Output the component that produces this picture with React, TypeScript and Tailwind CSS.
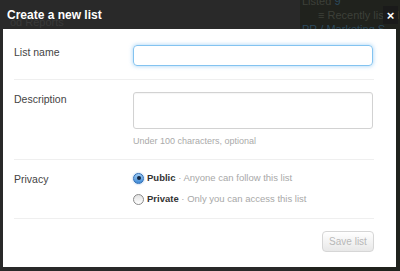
function Radio({ checked }: { checked?: boolean }) {
  if (checked) {
    return (
      <span className="flex h-[11px] w-[11px] shrink-0 items-center justify-center rounded-full border border-[#2f6db5] bg-gradient-to-b from-[#9fcdf5] to-[#3d8ad6] shadow-[0_0_2px_rgba(60,130,210,0.6)]">
        <span className="h-[4px] w-[4px] rounded-full bg-[#10243f]" />
      </span>
    );
  }
  return (
    <span className="h-[11px] w-[11px] shrink-0 rounded-full border border-[#8a8a8a] bg-gradient-to-b from-[#e2e2e2] to-[#ffffff]" />
  );
}

export default function App() {
  return (
    <div className="relative h-[271px] w-[400px] overflow-hidden bg-[#292929] font-['Liberation_Sans',Arial,sans-serif]">
      {/* page behind the overlay */}
      <div className="absolute inset-y-0 right-0 w-[100px] bg-[#20221d] pl-[2px] text-[11px] leading-[14px] text-[#3d4039]">
        <div className="-mt-[6px]">
          Listed <span className="text-[#2c4a5e]">9</span>
        </div>
        <div className="pl-[16px]">≡ Recently listed</div>
        <div className="text-[#2c4a5e]">PR / Marketing S</div>
      </div>
      <div className="absolute left-[10px] top-[14px] text-[11px] text-[#3a3a3a]">od Reports</div>

      <div className="relative flex h-full flex-col">
        <div className="flex h-[29px] items-center pl-[7px]">
          <h2 className="text-[12px] font-bold leading-[14px] text-white">Create a new list</h2>
        </div>
        <button className="absolute right-[2px] top-[6px] flex h-[18px] w-[15px] items-center justify-center bg-[#1a1a1a] text-[13px] font-bold leading-none text-white">
          ×
        </button>

        <div className="ml-[3px] h-[238px] w-[393px] bg-white pl-[11px] pr-[22px] text-[10.5px] leading-[14px] text-[#444]">
          <div className="flex border-b border-[#efefef] pb-[13px] pt-[16px]">
            <label className="w-[119px]">List name</label>
            <input className="h-[21px] w-[240px] rounded-[4px] border border-[#83c3f0] shadow-[0_0_4px_rgba(82,168,236,0.55)] outline-none" />
          </div>

          <div className="flex border-b border-[#efefef] pb-[12px] pt-[12px]">
            <label className="w-[119px]">Description</label>
            <div className="flex flex-col">
              <textarea className="h-[37px] w-[240px] resize-none rounded-[3px] border border-[#d2d2d2] shadow-[inset_0_1px_1px_rgba(0,0,0,0.04)] outline-none" />
              <span className="mt-[6px] text-[9px] leading-[12px] text-[#aaa]">
                Under 100 characters, optional
              </span>
            </div>
          </div>

          <div className="flex border-b border-[#efefef] pb-[12px] pt-[11px]">
            <label className="w-[119px] pt-[1px]">Privacy</label>
            <div className="flex flex-col gap-[7px] text-[9.5px]">
              <div className="flex items-center gap-[3px]">
                <Radio checked />
                <span>
                  <b className="text-[#333]">Public</b>
                  <span className="text-[#a8a8a8]"> · Anyone can follow this list</span>
                </span>
              </div>
              <div className="flex items-center gap-[3px]">
                <Radio />
                <span>
                  <b className="text-[#333]">Private</b>
                  <span className="text-[#a8a8a8]"> · Only you can access this list</span>
                </span>
              </div>
            </div>
          </div>

          <div className="flex justify-end pt-[12px]">
            <button className="h-[21px] w-[52px] rounded-[4px] border border-[#d6d6d6] bg-gradient-to-b from-[#ffffff] to-[#e8e8e8] text-[10px] text-[#b8b8b8]">
              Save list
            </button>
          </div>
        </div>
      </div>
    </div>
  );
}
